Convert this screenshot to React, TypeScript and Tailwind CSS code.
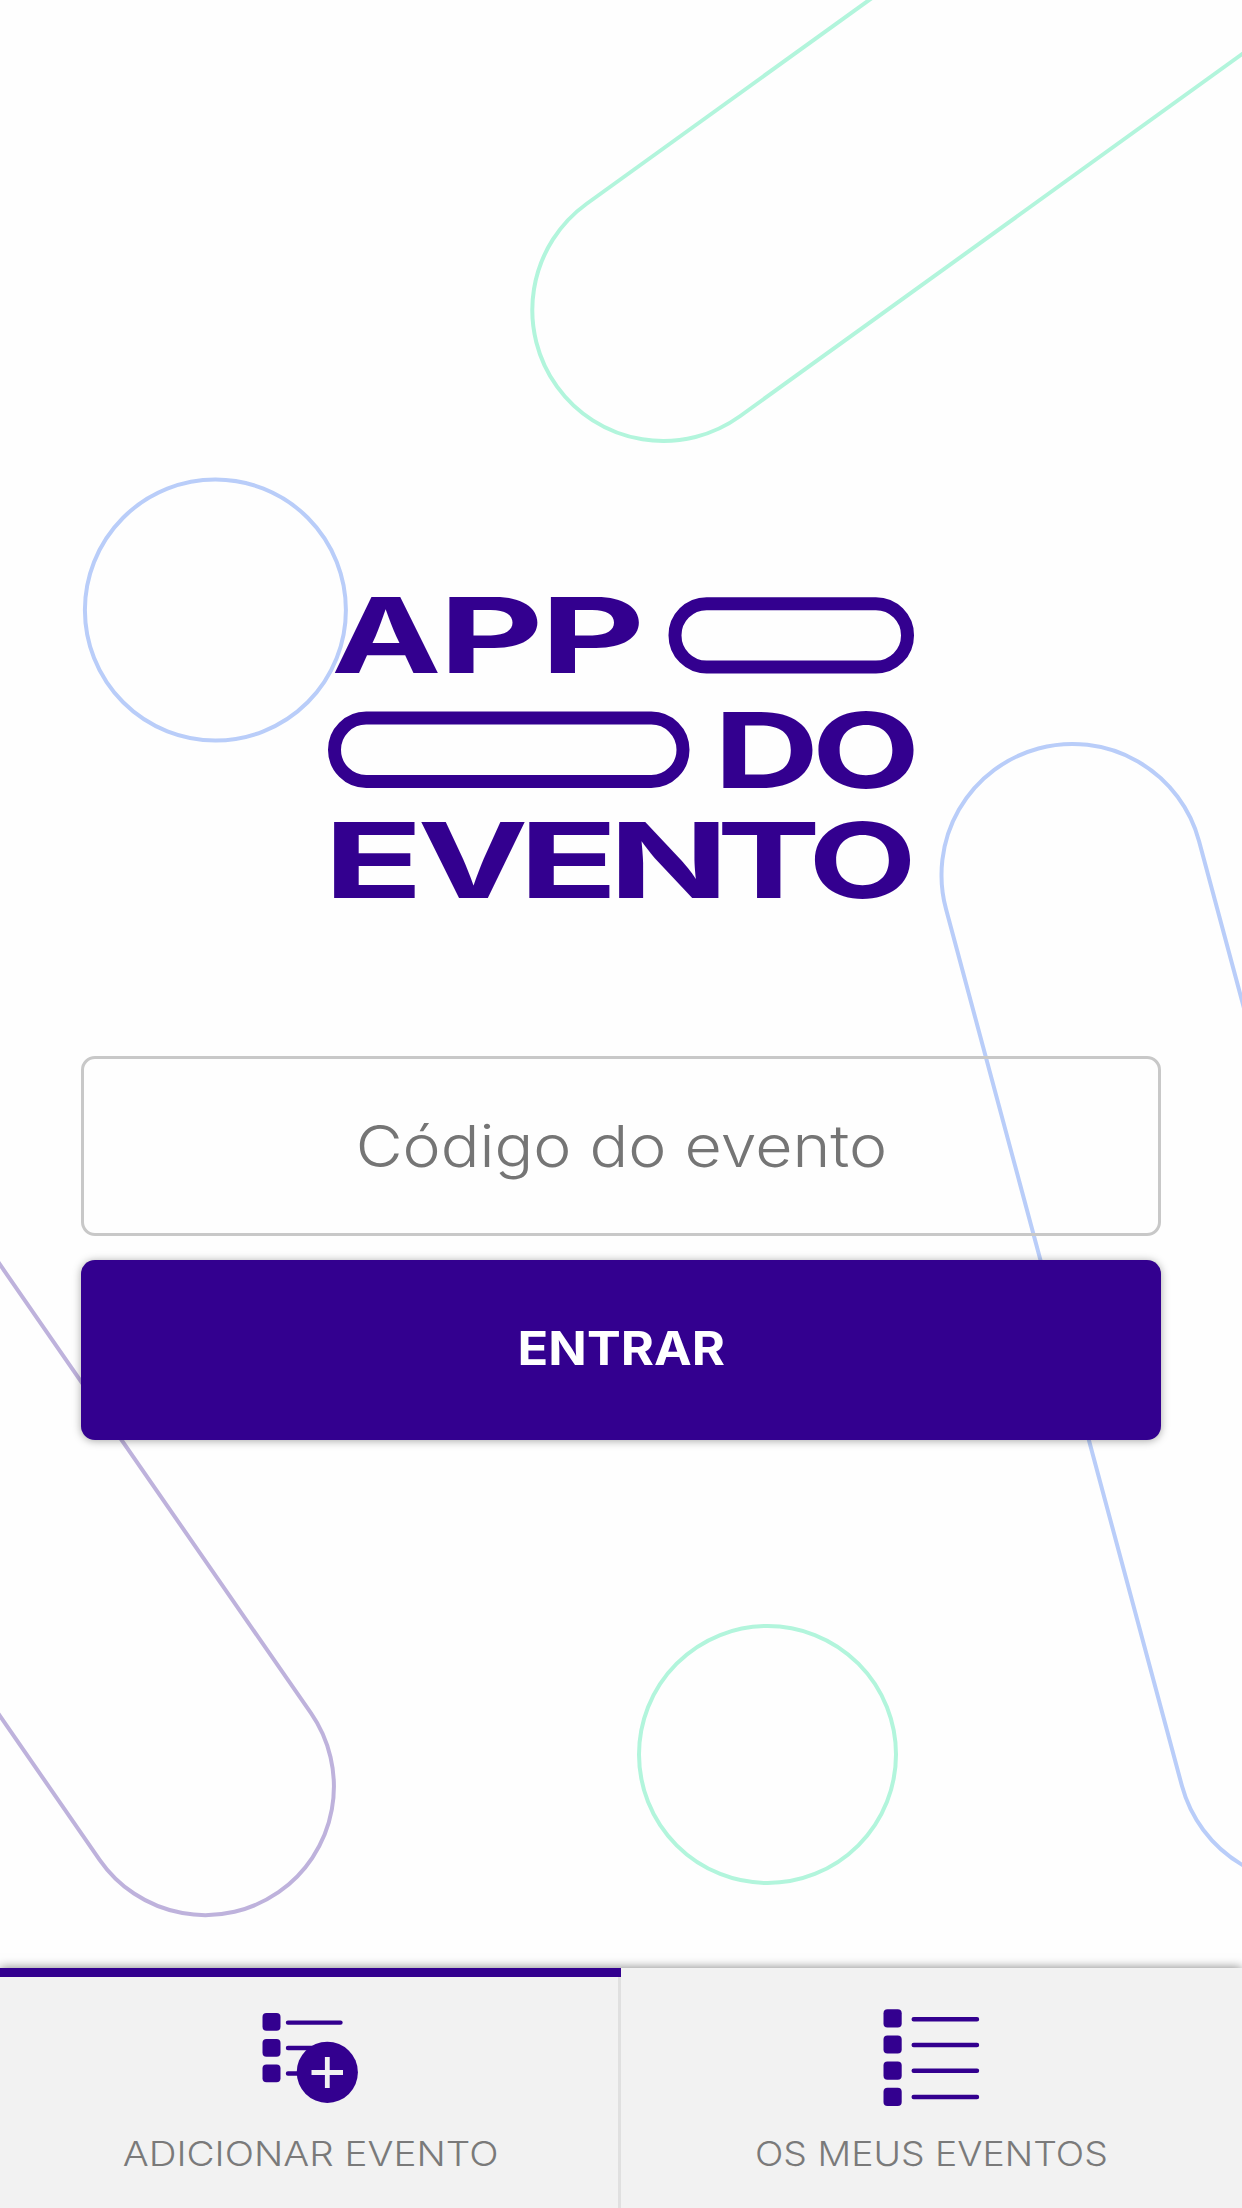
const INK = '#33008f';

// Each wordmark letter has its own width: glyph, left edge, baseline, horizontal stretch.
const LETTERS: [string, number, number, number][] = [
  ['A', 331.2, 673, 1.405],
  ['P', 438.8, 673, 1.54],
  ['P', 540.2, 673, 1.54],
  ['D', 713.7, 788, 1.39],
  ['O', 812, 788, 1.335],
  ['E', 323.2, 898, 1.573],
  ['V', 417.8, 898, 1.41],
  ['E', 518.6, 898, 1.564],
  ['N', 608.8, 898, 1.5],
  ['T', 716.5, 898, 1.49],
  ['O', 808.5, 898, 1.335],
];

function Background() {
  return (
    <svg className="absolute inset-0 h-full w-full" viewBox="0 0 1242 2208" fill="none" strokeWidth="4" aria-hidden="true">
      <g stroke="#b2f5dc">
        <rect x="-131" y="-131" width="1500" height="262" rx="131" transform="translate(663.3 310) rotate(-35.8)" />
        <circle cx="767.5" cy="1754.5" r="128.5" />
      </g>
      <g stroke="#b9cdf9">
        <circle cx="215.4" cy="610" r="130.5" />
        <rect x="-131" y="-131" width="262" height="1170" rx="131" transform="translate(1072.5 875) rotate(-15.06)" />
      </g>
      <rect x="-128.6" y="-1200" width="257.2" height="1328.6" rx="128.6" stroke="#beb2dc" transform="translate(205.3 1786.5) rotate(-34.73)" />
    </svg>
  );
}

function Logo() {
  return (
    <svg className="block h-[304px] w-[588px] overflow-visible" viewBox="327 596 588 304" fill={INK} aria-label="App do Evento">
      <g fontFamily="Inter, sans-serif" fontWeight="700" fontSize="105">
        {LETTERS.map(([glyph, x, y, stretch]) => (
          <text key={`${x}-${y}`} transform={`translate(${x} ${y}) scale(${stretch} 1)`}>
            {glyph}
          </text>
        ))}
      </g>
      <g fill="none" stroke={INK} strokeWidth="13">
        <rect x="675" y="603.7" width="232.5" height="63.3" rx="31.6" />
        <rect x="334.5" y="718" width="348.5" height="63.5" rx="31.7" />
      </g>
    </svg>
  );
}

function AddEventIcon() {
  return (
    <svg className="block h-[104px] w-[104px]" viewBox="259 2006 104 104" fill={INK} aria-hidden="true">
      {[2013, 2039, 2064.4].map((y) => (
        <rect key={y} x="262.5" y={y} width="18" height="17.8" rx="4" />
      ))}
      <path d="M288 2022.6H340.5M288 2048H320M288 2073.5H310" stroke={INK} strokeWidth="4.4" strokeLinecap="round" />
      <circle cx="327.3" cy="2072.3" r="30.6" />
      <path d="M311.5 2072.5H343M327.3 2057V2088" stroke="#f2f2f2" strokeWidth="4.8" />
    </svg>
  );
}

function EventListIcon() {
  return (
    <svg className="block h-[104px] w-[104px]" viewBox="880 2006 104 104" fill={INK} aria-hidden="true">
      {[2009.2, 2035.4, 2061.6, 2087.8].map((y) => (
        <rect key={y} x="883.5" y={y} width="18.2" height="18.2" rx="4" />
      ))}
      <path d="M913.7 2019.3H977M913.7 2045H977M913.7 2070.7H977M913.7 2097H977" stroke={INK} strokeWidth="4.4" strokeLinecap="round" />
    </svg>
  );
}

export default function App() {
  return (
    <div className="relative flex h-[2208px] w-[1242px] flex-col overflow-hidden bg-[#fefefe] font-['Inter',sans-serif]">
      <Background />
      <main className="relative flex flex-1 flex-col items-center px-[81px] pt-[596px]">
        <Logo />
        <div className="mt-[156px] flex h-[180px] w-full items-center justify-center rounded-[14px] border-[3px] border-[#c8c8c8]">
          <span className="scale-x-[1.11] text-[58px] leading-none font-light whitespace-nowrap text-[#757575]">Código do evento</span>
        </div>
        <button className="mt-6 flex h-[180px] w-full items-center justify-center rounded-[14px] bg-[#33008f] pb-[3px] text-[46px] font-bold text-white shadow-[0_1px_8px_rgba(0,0,0,0.35)]">
          <span className="scale-x-[1.1]">ENTRAR</span>
        </button>
      </main>
      <nav className="relative grid h-[240px] grid-cols-2 bg-[#f2f2f2] text-[34px] leading-10 font-light text-[#7a7a7a] shadow-[0_0_10px_rgba(0,0,0,0.5)]">
        <a className="flex flex-col items-center border-t-[9px] border-t-[#33008f] pt-[29px] shadow-[inset_-3px_0_0_#e0e0e0]">
          <AddEventIcon />
          <span className="mt-6 scale-x-[1.135] whitespace-nowrap">ADICIONAR EVENTO</span>
        </a>
        <a className="flex flex-col items-center pt-[38px]">
          <EventListIcon />
          <span className="mt-6 scale-x-[1.1] whitespace-nowrap">OS MEUS EVENTOS</span>
        </a>
      </nav>
    </div>
  );
}
